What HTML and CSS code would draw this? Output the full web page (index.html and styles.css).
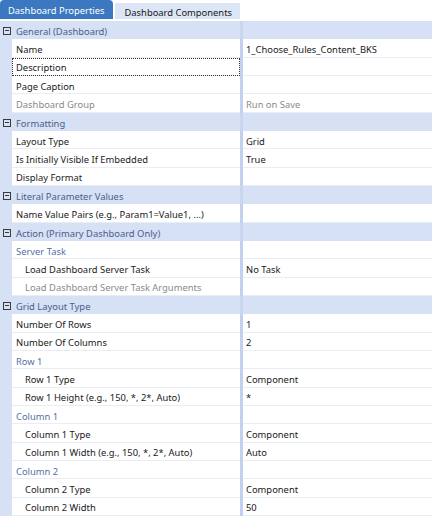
FILE: index.html
```html
<!DOCTYPE html>
<html lang="en">

<head>
    <meta charset="UTF-8">
    <meta name="viewport" content="width=device-width, initial-scale=1.0">
    <title>Dashboard Properties</title>
    <link rel="stylesheet" href="styles.css">
</head>

<body>
    <!-- tab strip -->
    <div class="tabs">
        <span class="tab on">Dashboard Properties</span>
        <span class="tab">Dashboard Components</span>
    </div>

    <!-- property grid -->
    <div class="grid">
        <div class="row cat"><span class="gut"><i class="tgl"></i></span><span class="key">General (Dashboard)</span><span class="bar"></span><span class="val"></span></div>
        <div class="row"><span class="gut"></span><span class="key">Name</span><span class="bar"></span><span class="val">1_Choose_Rules_Content_BKS</span></div>
        <div class="row"><span class="gut"></span><span class="key focus">Description</span><span class="bar"></span><span class="val"></span></div>
        <div class="row"><span class="gut"></span><span class="key">Page Caption</span><span class="bar"></span><span class="val"></span></div>
        <div class="row off"><span class="gut"></span><span class="key">Dashboard Group</span><span class="bar"></span><span class="val">Run on Save</span></div>

        <div class="row cat"><span class="gut"><i class="tgl"></i></span><span class="key">Formatting</span><span class="bar"></span><span class="val"></span></div>
        <div class="row"><span class="gut"></span><span class="key">Layout Type</span><span class="bar"></span><span class="val">Grid</span></div>
        <div class="row"><span class="gut"></span><span class="key">Is Initially Visible If Embedded</span><span class="bar"></span><span class="val">True</span></div>
        <div class="row"><span class="gut"></span><span class="key">Display Format</span><span class="bar"></span><span class="val"></span></div>

        <div class="row cat"><span class="gut"><i class="tgl"></i></span><span class="key">Literal Parameter Values</span><span class="bar"></span><span class="val"></span></div>
        <div class="row"><span class="gut"></span><span class="key">Name Value Pairs (e.g., Param1=Value1, ...)</span><span class="bar"></span><span class="val"></span></div>

        <div class="row cat"><span class="gut"><i class="tgl"></i></span><span class="key">Action (Primary Dashboard Only)</span><span class="bar"></span><span class="val"></span></div>
        <div class="row sub"><span class="gut"></span><span class="key">Server Task</span><span class="bar"></span><span class="val"></span></div>
        <div class="row in"><span class="gut"></span><span class="key">Load Dashboard Server Task</span><span class="bar"></span><span class="val">No Task</span></div>
        <div class="row in off"><span class="gut"></span><span class="key">Load Dashboard Server Task Arguments</span><span class="bar"></span><span class="val"></span></div>

        <div class="row cat"><span class="gut"><i class="tgl"></i></span><span class="key">Grid Layout Type</span><span class="bar"></span><span class="val"></span></div>
        <div class="row"><span class="gut"></span><span class="key">Number Of Rows</span><span class="bar"></span><span class="val">1</span></div>
        <div class="row"><span class="gut"></span><span class="key">Number Of Columns</span><span class="bar"></span><span class="val">2</span></div>
        <div class="row sub"><span class="gut"></span><span class="key">Row 1</span><span class="bar"></span><span class="val"></span></div>
        <div class="row in"><span class="gut"></span><span class="key">Row 1 Type</span><span class="bar"></span><span class="val">Component</span></div>
        <div class="row in"><span class="gut"></span><span class="key">Row 1 Height (e.g., 150, *, 2*, Auto)</span><span class="bar"></span><span class="val">*</span></div>
        <div class="row sub"><span class="gut"></span><span class="key">Column 1</span><span class="bar"></span><span class="val"></span></div>
        <div class="row in"><span class="gut"></span><span class="key">Column 1 Type</span><span class="bar"></span><span class="val">Component</span></div>
        <div class="row in"><span class="gut"></span><span class="key">Column 1 Width (e.g., 150, *, 2*, Auto)</span><span class="bar"></span><span class="val">Auto</span></div>
        <div class="row sub"><span class="gut"></span><span class="key">Column 2</span><span class="bar"></span><span class="val"></span></div>
        <div class="row in"><span class="gut"></span><span class="key">Column 2 Type</span><span class="bar"></span><span class="val">Component</span></div>
        <div class="row in"><span class="gut"></span><span class="key">Column 2 Width</span><span class="bar"></span><span class="val">50</span></div>
    </div>
</body>

</html>
```

FILE: styles.css
```css
/* reset */
* {
    margin: 0;
    box-sizing: border-box;
}

body {
    width: 432px;
    font-family: "Noto Sans", "Open Sans", sans-serif;
    font-size: 9.4px;
    color: #1a1a1a;
    background: #fff;
}

/* tabs */
.tabs {
    display: flex;
    align-items: flex-end;
    gap: 2px;
    height: 19px;
}

.tab {
    display: flex;
    align-items: center;
    height: 16px;
    padding: 2px 8px 0 10px;
    background: #dce6f6;
    color: #1a1a1a;
}

.tab.on {
    height: 19px;
    padding: 1px 8px 0 8px;
    background: #3b78c0;
    color: #fff;
    border-radius: 4px 4px 0 0;
}

/* grid */
.grid {
    margin-top: 2px;
}

.row {
    display: grid;
    grid-template-columns: 12px 228px 3px 1fr;
    height: 18.33px;
}

.row > span {
    display: flex;
    align-items: center;
    white-space: nowrap;
    overflow: hidden;
}

.gut {
    background: #d6e1f5;
}

.key {
    padding: 3px 0 0 4px;
    border-bottom: 1px solid #e8edf6;
}

.bar {
    background: #c2d2ee;
}

.val {
    padding: 3px 0 0 3px;
    border-bottom: 1px solid #e8edf6;
}

/* category header */
.cat .key,
.cat .val {
    background: #d6e1f5;
    border-bottom: 0;
    color: #4a5d88;
}

.cat .bar {
    background: #c8d6f0;
}

.tgl {
    position: relative;
    width: 8px;
    height: 8px;
    margin: 2px 0 0 3px;
    border: 1px solid #3a3a3a;
}

.tgl::after {
    content: "";
    position: absolute;
    left: 1px;
    right: 1px;
    top: 2px;
    height: 1px;
    background: #3a3a3a;
}

/* sub group, nested, disabled */
.sub .key {
    color: #5470a4;
}

.in .key {
    padding-left: 13px;
}

.off .key,
.off .val {
    color: #8a8a8a;
}

.key.focus {
    outline: 1px dotted #333;
    outline-offset: -1px;
}
```
